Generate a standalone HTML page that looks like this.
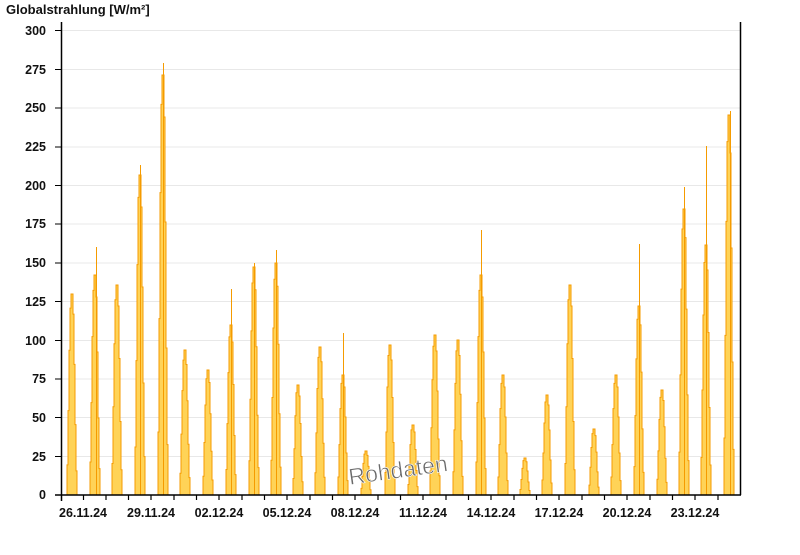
<!DOCTYPE html>
<html><head><meta charset="utf-8"><style>
body{margin:0;background:#fff;width:800px;height:550px;overflow:hidden}
svg text{font-family:"Liberation Sans",Arial,sans-serif}
</style></head><body>
<svg width="800" height="550" xmlns="http://www.w3.org/2000/svg">
<defs>
<path id="pk" d="M-5 0 V-0.15 H-4 V-0.42 H-3 V-0.72 H-2 V-0.93 H-1 V-1 H1 V-0.9 H2 V-0.65 H3 V-0.35 H4 V-0.12 H5 V0 Z" fill="#ffd357" stroke="#f59b00" stroke-width="1" vector-effect="non-scaling-stroke"/>
</defs>
<text x="6" y="14" font-size="13" font-weight="bold" fill="#111">Globalstrahlung [W/m²]</text>
<g stroke="#e8e8e8" stroke-width="1">
<line x1="62" y1="30.5" x2="740" y2="30.5"/><line x1="62" y1="69.5" x2="740" y2="69.5"/><line x1="62" y1="108" x2="740" y2="108"/><line x1="62" y1="147" x2="740" y2="147"/><line x1="62" y1="185.5" x2="740" y2="185.5"/><line x1="62" y1="224" x2="740" y2="224"/><line x1="62" y1="263" x2="740" y2="263"/><line x1="62" y1="301.5" x2="740" y2="301.5"/><line x1="62" y1="340.5" x2="740" y2="340.5"/><line x1="62" y1="379" x2="740" y2="379"/><line x1="62" y1="417.5" x2="740" y2="417.5"/><line x1="62" y1="456.5" x2="740" y2="456.5"/>
</g>
<g>
<use href="#pk" transform="translate(72,495) scale(1,201)"/>
<use href="#pk" transform="translate(95,495) scale(1,220)"/>
<use href="#pk" transform="translate(117,495) scale(1,210)"/>
<use href="#pk" transform="translate(140,495) scale(1,320)"/>
<use href="#pk" transform="translate(163,495) scale(1,420)"/>
<use href="#pk" transform="translate(185,495) scale(1,145)"/>
<use href="#pk" transform="translate(208,495) scale(1,125)"/>
<use href="#pk" transform="translate(231,495) scale(1,170)"/>
<use href="#pk" transform="translate(254,495) scale(1,228)"/>
<use href="#pk" transform="translate(276,495) scale(1,232)"/>
<use href="#pk" transform="translate(298,495) scale(1,110)"/>
<use href="#pk" transform="translate(320,495) scale(1,148)"/>
<use href="#pk" transform="translate(343,495) scale(1,120)"/>
<use href="#pk" transform="translate(366,495) scale(1,44)"/>
<use href="#pk" transform="translate(390,495) scale(1,150)"/>
<use href="#pk" transform="translate(413,495) scale(1,70)"/>
<use href="#pk" transform="translate(435,495) scale(1,160)"/>
<use href="#pk" transform="translate(458,495) scale(1,155)"/>
<use href="#pk" transform="translate(481,495) scale(1,220)"/>
<use href="#pk" transform="translate(503,495) scale(1,120)"/>
<use href="#pk" transform="translate(525,495) scale(1,37)"/>
<use href="#pk" transform="translate(547,495) scale(1,100)"/>
<use href="#pk" transform="translate(570,495) scale(1,210)"/>
<use href="#pk" transform="translate(594,495) scale(1,66)"/>
<use href="#pk" transform="translate(616,495) scale(1,120)"/>
<use href="#pk" transform="translate(639,495) scale(1,189)"/>
<use href="#pk" transform="translate(662,495) scale(1,105)"/>
<use href="#pk" transform="translate(684,495) scale(1,286)"/>
<use href="#pk" transform="translate(706,495) scale(1,250)"/>
<use href="#pk" transform="translate(729,495) scale(1,380)"/>
</g>
<g stroke="#f59b00" stroke-width="1">
<line x1="96.5" y1="495" x2="96.5" y2="247"/>
<line x1="140.5" y1="495" x2="140.5" y2="165"/>
<line x1="163.5" y1="495" x2="163.5" y2="63"/>
<line x1="231.5" y1="495" x2="231.5" y2="289"/>
<line x1="254.5" y1="495" x2="254.5" y2="263"/>
<line x1="276.5" y1="495" x2="276.5" y2="250"/>
<line x1="343.5" y1="495" x2="343.5" y2="333"/>
<line x1="481.5" y1="495" x2="481.5" y2="230"/>
<line x1="639.5" y1="495" x2="639.5" y2="244"/>
<line x1="684.5" y1="495" x2="684.5" y2="187"/>
<line x1="706.5" y1="495" x2="706.5" y2="146"/>
<line x1="730.5" y1="495" x2="730.5" y2="111"/>
</g>
<text x="398" y="478" font-size="23" fill="#6a6a6a" stroke="#fff" stroke-width="0.6" text-anchor="middle" transform="rotate(-8 398 470)">Rohdaten</text>
<g stroke="#000" stroke-width="1.5">
<line x1="61.5" y1="22" x2="61.5" y2="501"/>
<line x1="740.5" y1="22" x2="740.5" y2="495"/>
<line x1="55" y1="495" x2="741" y2="495"/>
</g>
<g stroke="#000" stroke-width="1">
<line x1="55" y1="30.5" x2="61" y2="30.5"/><line x1="55" y1="69.5" x2="61" y2="69.5"/><line x1="55" y1="108" x2="61" y2="108"/><line x1="55" y1="147" x2="61" y2="147"/><line x1="55" y1="185.5" x2="61" y2="185.5"/><line x1="55" y1="224" x2="61" y2="224"/><line x1="55" y1="263" x2="61" y2="263"/><line x1="55" y1="301.5" x2="61" y2="301.5"/><line x1="55" y1="340.5" x2="61" y2="340.5"/><line x1="55" y1="379" x2="61" y2="379"/><line x1="55" y1="417.5" x2="61" y2="417.5"/><line x1="55" y1="456.5" x2="61" y2="456.5"/>
</g>
<g stroke="#000" stroke-width="1.2">
<line x1="83.5" y1="495" x2="83.5" y2="500"/><line x1="106" y1="495" x2="106" y2="500"/><line x1="128.5" y1="495" x2="128.5" y2="500"/><line x1="151" y1="495" x2="151" y2="500"/><line x1="174" y1="495" x2="174" y2="500"/><line x1="196.5" y1="495" x2="196.5" y2="500"/><line x1="219" y1="495" x2="219" y2="500"/><line x1="242" y1="495" x2="242" y2="500"/><line x1="264.5" y1="495" x2="264.5" y2="500"/><line x1="287" y1="495" x2="287" y2="500"/><line x1="310" y1="495" x2="310" y2="500"/><line x1="332.5" y1="495" x2="332.5" y2="500"/><line x1="355" y1="495" x2="355" y2="500"/><line x1="378" y1="495" x2="378" y2="500"/><line x1="400.5" y1="495" x2="400.5" y2="500"/><line x1="423" y1="495" x2="423" y2="500"/><line x1="446" y1="495" x2="446" y2="500"/><line x1="468.5" y1="495" x2="468.5" y2="500"/><line x1="491" y1="495" x2="491" y2="500"/><line x1="514" y1="495" x2="514" y2="500"/><line x1="536.5" y1="495" x2="536.5" y2="500"/><line x1="559" y1="495" x2="559" y2="500"/><line x1="582" y1="495" x2="582" y2="500"/><line x1="604.5" y1="495" x2="604.5" y2="500"/><line x1="627" y1="495" x2="627" y2="500"/><line x1="650" y1="495" x2="650" y2="500"/><line x1="672.5" y1="495" x2="672.5" y2="500"/><line x1="695" y1="495" x2="695" y2="500"/><line x1="718" y1="495" x2="718" y2="500"/>
</g>
<g font-size="12.5" font-weight="bold" fill="#111" text-anchor="end">
<text x="46" y="35">300</text><text x="46" y="74">275</text><text x="46" y="112">250</text><text x="46" y="151">225</text><text x="46" y="190">200</text><text x="46" y="228">175</text><text x="46" y="267">150</text><text x="46" y="306">125</text><text x="46" y="345">100</text><text x="46" y="383">75</text><text x="46" y="422">50</text><text x="46" y="461">25</text><text x="46" y="499">0</text>
</g>
<g font-size="12.5" font-weight="bold" fill="#111" text-anchor="middle">
<text x="83" y="517">26.11.24</text><text x="151" y="517">29.11.24</text><text x="219" y="517">02.12.24</text><text x="287" y="517">05.12.24</text><text x="355" y="517">08.12.24</text><text x="423" y="517">11.12.24</text><text x="491" y="517">14.12.24</text><text x="559" y="517">17.12.24</text><text x="627" y="517">20.12.24</text><text x="695" y="517">23.12.24</text>
</g>
</svg>
</body></html>
